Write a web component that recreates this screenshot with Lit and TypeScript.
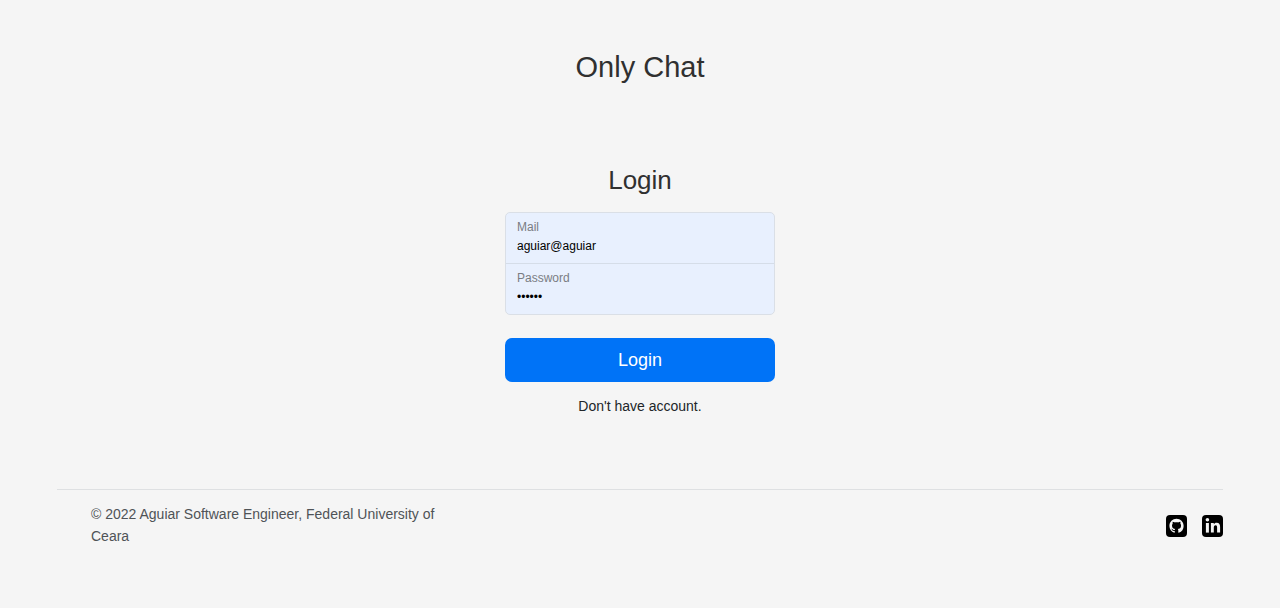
import { LitElement, html, css } from "lit";
import { customElement, state } from "lit/decorators.js";

@customElement("login-form")
class LoginForm extends LitElement {
  @state() private mail = "aguiar@aguiar";
  @state() private password = "aguiar";

  static styles = css`
    :host {
      display: block;
      width: 270px;
      max-width: 100%;
    }
    * {
      box-sizing: border-box;
    }
    .form {
      display: flex;
      flex-direction: column;
      text-align: center;
    }
    .title {
      margin: 0 0 16px;
      font-size: 26px;
      line-height: 32px;
      font-weight: 400;
      color: #303030;
    }
    .fields {
      border: 1px solid #dadfe6;
      border-radius: 5px;
      overflow: hidden;
      background: #e8f0fe;
      text-align: left;
    }
    .field {
      display: block;
      height: 50px;
      padding: 6px 11px 0;
    }
    .field + .field {
      height: 51px;
      border-top: 1px solid #d5dde8;
    }
    .label {
      display: block;
      margin-bottom: 1px;
      font-size: 12px;
      line-height: 16px;
      color: #7a7d83;
    }
    .input {
      display: block;
      width: 100%;
      height: 20px;
      margin: 0;
      padding: 0;
      border: 0;
      outline: 0;
      background: transparent;
      color: #000;
      font: 12px/20px "Liberation Sans", Arial, sans-serif;
    }
    .submit {
      height: 44px;
      margin: 23px 0 12px;
      padding: 0;
      border: 0;
      border-radius: 7px;
      background: #0073f7;
      color: #fff;
      font: 18px/24px "Liberation Sans", Arial, sans-serif;
      cursor: pointer;
    }
    .signup {
      align-self: center;
      font-size: 14px;
      line-height: 24px;
      color: #212529;
      text-decoration: none;
    }
  `;

  render() {
    return html`
      <form class="form" @submit=${(e: Event) => e.preventDefault()}>
        <h2 class="title">Login</h2>
        <div class="fields">
          <div class="field">
            <label class="label" for="mail">Mail</label>
            <input class="input" id="mail" type="text" .value=${this.mail}
              @input=${(e: Event) => (this.mail = (e.target as HTMLInputElement).value)} />
          </div>
          <div class="field">
            <label class="label" for="password">Password</label>
            <input class="input" id="password" type="password" .value=${this.password}
              @input=${(e: Event) => (this.password = (e.target as HTMLInputElement).value)} />
          </div>
        </div>
        <button class="submit" type="submit">Login</button>
        <a class="signup" href="#register">Don't have account.</a>
      </form>
    `;
  }
}

@customElement("page-footer")
class PageFooter extends LitElement {
  static styles = css`
    :host {
      display: block;
    }
    .footer {
      display: flex;
      justify-content: space-between;
      align-items: center;
      padding: 13px 0;
      border-top: 1px solid #dee0e2;
    }
    .copy {
      max-width: 366px;
      margin: 0 0 0 34px;
      font-size: 14px;
      line-height: 22px;
      color: #4f5357;
    }
    .links {
      display: flex;
      gap: 15px;
      padding-top: 2px;
    }
    .link {
      display: block;
      color: #000;
    }
    .icon {
      display: block;
      width: 21px;
      height: 22px;
    }
  `;

  render() {
    return html`
      <footer class="footer">
        <p class="copy">© 2022 Aguiar Software Engineer, Federal University of Ceara</p>
        <nav class="links">
          <a class="link" href="#github" aria-label="GitHub">
            <svg class="icon" viewBox="0 0 21 22">
              <rect width="21" height="22" rx="4" fill="currentColor" />
              <path transform="translate(3.4 3.8) scale(0.89)" fill="#f5f5f5"
                d="M8 0C3.58 0 0 3.58 0 8c0 3.54 2.29 6.53 5.47 7.59.4.07.55-.17.55-.38 0-.19-.01-.82-.01-1.49-2.01.37-2.53-.49-2.69-.94-.09-.23-.48-.94-.82-1.13-.28-.15-.68-.52-.01-.53.63-.01 1.08.58 1.23.82.72 1.21 1.87.87 2.33.66.07-.52.28-.87.51-1.07-1.78-.2-3.64-.89-3.64-3.95 0-.87.31-1.59.82-2.15-.08-.2-.36-1.02.08-2.12 0 0 .67-.21 2.2.82.64-.18 1.32-.27 2-.27s1.36.09 2 .27c1.53-1.04 2.2-.82 2.2-.82.44 1.1.16 1.92.08 2.12.51.56.82 1.27.82 2.15 0 3.07-1.87 3.75-3.65 3.95.29.25.54.73.54 1.48 0 1.07-.01 1.93-.01 2.2 0 .21.15.46.55.38A8.01 8.01 0 0 0 16 8c0-4.42-3.58-8-8-8z" />
            </svg>
          </a>
          <a class="link" href="#linkedin" aria-label="LinkedIn">
            <svg class="icon" viewBox="0 0 21 22">
              <rect width="21" height="22" rx="4" fill="currentColor" />
              <circle cx="5.4" cy="4.7" r="1.8" fill="#f5f5f5" />
              <rect x="3.9" y="8" width="3" height="9.6" fill="#f5f5f5" />
              <path fill="#f5f5f5"
                d="M8.9 8h2.9v1.3c.5-.9 1.5-1.6 2.8-1.6 2.8 0 3.5 1.8 3.5 4.3v5.6h-3v-4.9c0-1.2-.1-2.5-1.5-2.5s-1.8 1.2-1.8 2.4v5H8.9z" />
            </svg>
          </a>
        </nav>
      </footer>
    `;
  }
}

@customElement("app-root")
class AppRoot extends LitElement {
  static styles = css`
    :host {
      display: block;
      box-sizing: border-box;
      min-height: 100vh;
      padding: 49px 57px 0;
      background: #f5f5f5;
      font-family: "Liberation Sans", Arial, sans-serif;
    }
    .brand {
      margin: 0;
      text-align: center;
      font-size: 29px;
      line-height: 36px;
      font-weight: 400;
      color: #303030;
    }
    .main {
      display: flex;
      justify-content: center;
      padding: 79px 0 71px;
    }
  `;

  render() {
    return html`
      <h1 class="brand">Only Chat</h1>
      <main class="main"><login-form></login-form></main>
      <page-footer></page-footer>
    `;
  }
}
